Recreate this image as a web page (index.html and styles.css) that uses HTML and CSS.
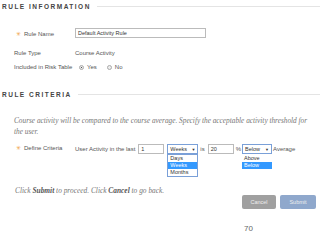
FILE: index.html
```html
<!DOCTYPE html>
<html lang="en">
<head>
    <meta charset="UTF-8">
    <title>Rule</title>
    <link rel="stylesheet" href="styles.css">
</head>
<body>
    <!-- Rule Information -->
    <div class="section-head">
        <h2>RULE INFORMATION</h2>
        <div class="rule-line"></div>
    </div>
    <div class="form-rows">
        <div class="row row-name">
            <label class="label"><span class="req">&#10035;</span>Rule Name</label>
            <div class="text-input wide">Default Activity Rule</div>
        </div>
        <div class="row row-type">
            <label class="label">Rule Type</label>
            <span>Course Activity</span>
        </div>
        <div class="row row-risk">
            <label class="label">Included in Risk Table</label>
            <span class="radio on"></span><span class="opt">Yes</span>
            <span class="radio"></span><span class="opt">No</span>
        </div>
    </div>

    <!-- Rule Criteria -->
    <div class="section-head crit-head">
        <h2>RULE CRITERIA</h2>
        <div class="rule-line"></div>
    </div>
    <p class="desc">Course activity will be compared to the course average. Specify the acceptable activity threshold for the user.</p>
    <div class="row row-crit">
        <label class="label"><span class="req">&#10035;</span>Define Criteria</label>
        <span>User Activity in the last</span>
        <div class="text-input small">1</div>
        <div class="select-wrap">
            <div class="select sel-period">Weeks <span class="arrow">&#9660;</span></div>
            <ul class="dropdown drop-period">
                <li>Days</li>
                <li class="hl">Weeks</li>
                <li>Months</li>
            </ul>
        </div>
        <span class="is">is</span>
        <div class="text-input small pct-input">20</div>
        <span class="pct">%</span>
        <div class="select-wrap">
            <div class="select sel-dir">Below <span class="arrow">&#9660;</span></div>
            <ul class="dropdown drop-dir">
                <li>Above</li>
                <li class="hl">Below</li>
            </ul>
        </div>
        <span class="avg">Average</span>
    </div>

    <p class="hint">Click <b>Submit</b> to proceed. Click <b>Cancel</b> to go back.</p>
    <div class="buttons">
        <button class="btn cancel">Cancel</button>
        <button class="btn submit">Submit</button>
    </div>

    <div class="page-num">70</div>
</body>
</html>
```
FILE: styles.css
```css
/* General */
* {
    margin: 0;
    padding: 0;
    box-sizing: border-box;
}

body {
    width: 320px;
    height: 240px;
    background: #fff;
    font-family: "Liberation Sans", Arial, sans-serif;
    font-size: 6px;
    color: #555;
    overflow: hidden;
}

/* Section headings */
.section-head {
    display: flex;
    align-items: center;
    padding: 2px 0 0 2px;
    height: 11px;
}

.section-head h2 {
    font-size: 6.5px;
    font-weight: bold;
    letter-spacing: 1.5px;
    color: #444;
    margin-right: 6px;
}

.rule-line {
    flex: 1;
    border-top: 1px solid #e4e4e4;
}

.crit-head {
    margin-top: 18px;
}

/* Rows */
.form-rows {
    padding-top: 17px;
}

.row {
    display: flex;
    align-items: center;
    padding-left: 14px;
}

.label {
    width: 61px;
    flex-shrink: 0;
}

.req {
    color: #f0a040;
    font-size: 6px;
    margin: 0 3px 0 2px;
}

.row-name {
    height: 10px;
}

.row-type {
    margin-top: 12px;
}

.row-risk {
    margin-top: 8px;
}

.text-input {
    height: 10px;
    border: 1px solid #bbb;
    background: #fff;
    padding: 1px 2px;
    font-size: 5.5px;
    color: #333;
}

.wide {
    width: 131px;
}

.radio {
    width: 5px;
    height: 5px;
    border-radius: 50%;
    border: 1px solid #aaa;
    background: #eee;
    margin: 0 3px 0 4px;
}

.radio.on {
    background: radial-gradient(#555 35%, #e8e8e8 45%);
}

.opt {
    margin-right: 6px;
}

/* Criteria */
.desc {
    font-family: "Liberation Serif", "Times New Roman", serif;
    font-style: italic;
    font-size: 7.3px;
    color: #777;
    padding: 16px 8px 0 14px;
    line-height: 11px;
}

.row-crit {
    margin-top: 7px;
    height: 10px;
    align-items: flex-start;
}

.row-crit > span {
    line-height: 10px;
}

.small {
    width: 26px;
    margin: 0 3px;
}

.pct-input {
    margin: 0 2px 0 1px;
}

.select-wrap {
    position: relative;
}

.select {
    height: 10px;
    border: 1px solid #7aa0d8;
    padding: 1px 2px;
    font-size: 5.5px;
    color: #333;
    display: flex;
    justify-content: space-between;
}

.arrow {
    font-size: 4px;
    line-height: 7px;
}

.sel-period {
    width: 31px;
}

.sel-dir {
    width: 30px;
}

.is {
    margin: 0 2px;
}

.pct {
    margin-right: 1px;
}

.avg {
    padding-left: 1px;
}

.dropdown {
    position: absolute;
    left: 0;
    top: 10px;
    list-style: none;
    border: 1px solid #7aa0d8;
    background: #fff;
    font-size: 5.5px;
    color: #333;
}

.dropdown li {
    height: 7px;
    line-height: 7px;
    padding-left: 2px;
}

.drop-period {
    width: 31px;
}

.drop-dir {
    width: 30px;
    border: none;
    top: 11px;
}

.hl {
    background: #3399ff;
    color: #fff;
}

/* Hint and buttons */
.hint {
    font-family: "Liberation Serif", "Times New Roman", serif;
    font-style: italic;
    font-size: 7.4px;
    color: #777;
    padding: 32px 0 0 15px;
}

.hint b {
    color: #555;
}

.buttons {
    display: flex;
    justify-content: flex-end;
    gap: 4px;
    padding-right: 4px;
    margin-top: 0;
}

.btn {
    border: none;
    border-radius: 2px;
    height: 14px;
    font-family: "Liberation Sans", Arial, sans-serif;
    font-size: 5.5px;
    color: #eee;
}

.cancel {
    width: 34px;
    background: #a0a0a0;
}

.submit {
    width: 36px;
    background: #8fa8cc;
}

.page-num {
    font-size: 8px;
    color: #666;
    padding: 15px 0 0 244px;
}
```
